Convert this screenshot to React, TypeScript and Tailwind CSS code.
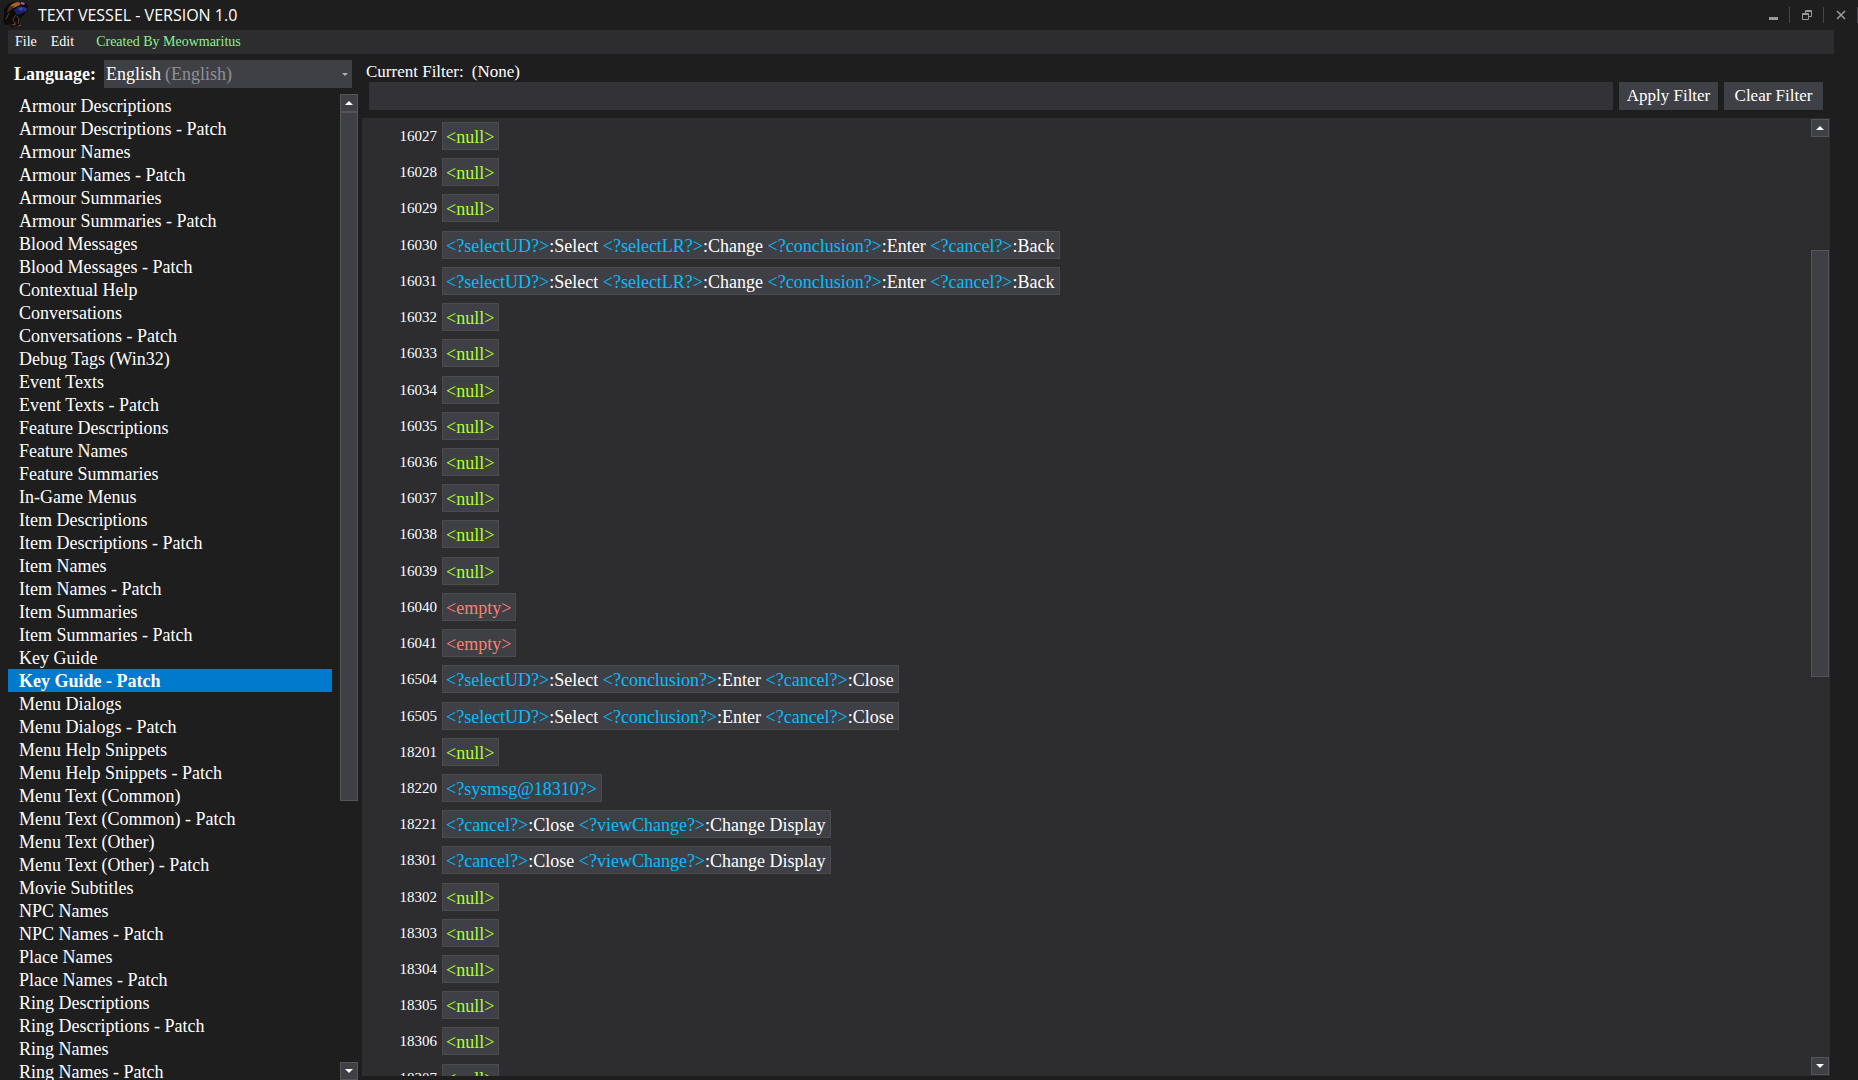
import React, { useState } from 'react';

interface Entry {
  id: number;
  text: string;
}

const categories = [
  'Armour Descriptions',
  'Armour Descriptions - Patch',
  'Armour Names',
  'Armour Names - Patch',
  'Armour Summaries',
  'Armour Summaries - Patch',
  'Blood Messages',
  'Blood Messages - Patch',
  'Contextual Help',
  'Conversations',
  'Conversations - Patch',
  'Debug Tags (Win32)',
  'Event Texts',
  'Event Texts - Patch',
  'Feature Descriptions',
  'Feature Names',
  'Feature Summaries',
  'In-Game Menus',
  'Item Descriptions',
  'Item Descriptions - Patch',
  'Item Names',
  'Item Names - Patch',
  'Item Summaries',
  'Item Summaries - Patch',
  'Key Guide',
  'Key Guide - Patch',
  'Menu Dialogs',
  'Menu Dialogs - Patch',
  'Menu Help Snippets',
  'Menu Help Snippets - Patch',
  'Menu Text (Common)',
  'Menu Text (Common) - Patch',
  'Menu Text (Other)',
  'Menu Text (Other) - Patch',
  'Movie Subtitles',
  'NPC Names',
  'NPC Names - Patch',
  'Place Names',
  'Place Names - Patch',
  'Ring Descriptions',
  'Ring Descriptions - Patch',
  'Ring Names',
  'Ring Names - Patch',
];

const selectText = '<?selectUD?>:Select <?selectLR?>:Change <?conclusion?>:Enter <?cancel?>:Back';
const closeText = '<?selectUD?>:Select <?conclusion?>:Enter <?cancel?>:Close';
const displayText = '<?cancel?>:Close <?viewChange?>:Change Display';

const entries: Entry[] = [
  { id: 16027, text: '<null>' },
  { id: 16028, text: '<null>' },
  { id: 16029, text: '<null>' },
  { id: 16030, text: selectText },
  { id: 16031, text: selectText },
  { id: 16032, text: '<null>' },
  { id: 16033, text: '<null>' },
  { id: 16034, text: '<null>' },
  { id: 16035, text: '<null>' },
  { id: 16036, text: '<null>' },
  { id: 16037, text: '<null>' },
  { id: 16038, text: '<null>' },
  { id: 16039, text: '<null>' },
  { id: 16040, text: '<empty>' },
  { id: 16041, text: '<empty>' },
  { id: 16504, text: closeText },
  { id: 16505, text: closeText },
  { id: 18201, text: '<null>' },
  { id: 18220, text: '<?sysmsg@18310?>' },
  { id: 18221, text: displayText },
  { id: 18301, text: displayText },
  { id: 18302, text: '<null>' },
  { id: 18303, text: '<null>' },
  { id: 18304, text: '<null>' },
  { id: 18305, text: '<null>' },
  { id: 18306, text: '<null>' },
  { id: 18307, text: '<null>' },
];

function tokenColor(token: string) {
  if (token === '<null>') return 'text-[#adff2f]';
  if (token === '<empty>') return 'text-[#fa8072]';
  if (token.startsWith('<?')) return 'text-[#00bfff]';
  return 'text-white';
}

function EntryText({ text }: { text: string }) {
  // keep the tags as separate tokens so they can be coloured
  const tokens = text.split(/(<[^>]*>)/).filter(Boolean);
  return (
    <>
      {tokens.map((token, i) => (
        <span key={i} className={tokenColor(token)}>
          {token}
        </span>
      ))}
    </>
  );
}

function ScrollButton({ direction }: { direction: 'up' | 'down' }) {
  return (
    <button
      aria-label={`Scroll ${direction}`}
      className="flex h-[18px] w-full shrink-0 items-center justify-center border border-[#555558] bg-[#3f3f46]"
    >
      <svg width="8" height="4" viewBox="0 0 8 4" fill="#fff">
        {direction === 'up' ? <path d="M0 4 4 0l4 4z" /> : <path d="M0 0h8L4 4z" />}
      </svg>
    </button>
  );
}

function AppIcon() {
  return (
    <svg width="28" height="28" viewBox="0 0 28 28" fill="none">
      <path d="M2 8 6 3l6-2h10l4 3-1 6-5 6-3 3 1 7-4-2-4 3-2-4-5 1-2-5 1-4z" fill="#0d0b0c" />
      <path d="M8 5c2-2 5-4 9-4l2 2-3 2-5 2-4 2z" fill="#a8602a" />
      <path d="M6 7c2-2 4-2 6-2l-3 4-4 3z" fill="#4a2a1c" />
      <path d="m19 1 4 1-1 2-3-1z" fill="#b45ab8" />
      <path d="m12 9 5-4 6 1 2 2-4 4-6 2z" fill="#1a2260" />
      <path d="m16 8 3-2 3 1-3 3z" fill="#3547b0" />
      <path d="m22 7 3 1-2 3z" fill="#4a3a8c" />
      <path d="m14 14-3 4 2 5m2-8 2 3-1 5M7 12l-3 6" stroke="#5c4230" />
      <path d="m10 24 4-1m2 2 3-1" stroke="#7a5034" />
    </svg>
  );
}

export default function App() {
  const [selected, setSelected] = useState('Key Guide - Patch');
  const [language, setLanguage] = useState('English');
  const [filter, setFilter] = useState('');

  return (
    <div className="flex h-screen flex-col overflow-hidden bg-[#1e1e1e] font-['Liberation_Serif',serif] text-white">
      {/* Title bar */}
      <header className="flex h-[30px] shrink-0 items-center pl-[2px]">
        <AppIcon />
        <h1 className="ml-2 font-['Open_Sans',sans-serif] text-base leading-5">TEXT VESSEL - VERSION 1.0</h1>
        <div className="ml-auto flex items-center text-[#999]">
          <button aria-label="Minimize" className="flex h-4 w-8 items-center justify-center">
            <svg width="10" height="10" viewBox="0 0 10 10" fill="currentColor">
              <path d="M1 7h9v3H1z" />
            </svg>
          </button>
          <button
            aria-label="Restore"
            className="flex h-4 w-[34px] items-center justify-center border-l border-[#46464a]"
          >
            <svg width="10" height="10" viewBox="0 0 10 10" fill="none" stroke="currentColor">
              <path d="M.5 3.5h6v6h-6zM.5 4.5h6M3.5 3V.5h6v6H7M3.5 1.5h6" />
            </svg>
          </button>
          <button
            aria-label="Close"
            className="flex h-4 w-[35px] items-center justify-center border-x border-[#46464a]"
          >
            <svg width="10" height="10" viewBox="0 0 10 10" fill="none" stroke="currentColor" strokeWidth="1.6">
              <path d="m1 1 8 8M9 1 1 9" />
            </svg>
          </button>
        </div>
      </header>

      {/* Menu */}
      <nav className="mr-6 ml-2 flex h-6 shrink-0 items-center bg-[#2d2d30] pl-[7px] text-sm">
        <button>File</button>
        <button className="ml-[14px]">Edit</button>
        <button className="ml-[22px] text-[#90ee90]">Created By Meowmaritus</button>
      </nav>

      <div className="flex min-h-0 flex-1">
        {/* Sidebar */}
        <aside className="flex w-[358px] shrink-0 flex-col pt-[6px] pl-2">
          <div className="flex h-7 shrink-0 items-center pr-[6px] pl-[6px] text-lg">
            <label htmlFor="language" className="w-[90px] font-bold">
              Language:
            </label>
            <div className="flex h-7 flex-1 items-center bg-[#3f3f46] pr-1 pl-[2px]">
              <select
                id="language"
                value={language}
                onChange={(e) => setLanguage(e.target.value)}
                className="appearance-none [field-sizing:content]"
              >
                <option>English</option>
              </select>
              <span className="ml-1 text-[#8f8f94]">(English)</span>
              <svg className="ml-auto" width="6" height="3" viewBox="0 0 6 3" fill="#b0b0b4">
                <path d="M0 0h6L3 3z" />
              </svg>
            </div>
          </div>

          <div className="mt-[6px] flex min-h-0 flex-1">
            <ul className="mr-2 flex-1 overflow-hidden text-lg leading-[25px]">
              {categories.map((name) => (
                <li key={name}>
                  <button
                    onClick={() => setSelected(name)}
                    className={`flex h-[23px] w-full items-start pl-[11px] text-left whitespace-nowrap ${
                      name === selected ? 'bg-[#007acc] font-bold' : ''
                    }`}
                  >
                    {name}
                  </button>
                </li>
              ))}
            </ul>
            <div className="flex w-[18px] flex-col">
              <ScrollButton direction="up" />
              <div className="flex min-h-0 flex-1 flex-col">
                <div className="h-[72.5%] border border-[#555558] bg-[#3f3f46]" />
              </div>
              <ScrollButton direction="down" />
            </div>
          </div>
        </aside>

        {/* Main */}
        <main className="mr-7 ml-1 flex min-w-0 flex-1 flex-col pb-1">
          <div className="mt-2 ml-1 h-5 text-[17px] leading-5">
            <label htmlFor="filter">Current Filter:</label>
            <span className="ml-2">(None)</span>
          </div>
          <form
            onSubmit={(e) => e.preventDefault()}
            className="mr-[7px] ml-[7px] flex h-7 shrink-0 gap-[6px] text-[17px]"
          >
            <input
              id="filter"
              type="text"
              value={filter}
              onChange={(e) => setFilter(e.target.value)}
              className="min-w-0 flex-1 bg-[#333337] px-1 outline-none"
            />
            <button type="submit" className="w-[99px] bg-[#3f3f46]">
              Apply Filter
            </button>
            <button type="button" onClick={() => setFilter('')} className="w-[99px] bg-[#3f3f46]">
              Clear Filter
            </button>
          </form>

          <section className="mt-2 flex min-h-0 flex-1 overflow-hidden bg-[#2d2d30] p-px">
            <ul className="mt-[3px] flex h-[calc(100%+14px)] flex-1 flex-col justify-between">
              {entries.map((entry) => (
                <li key={entry.id} className="flex h-7 shrink-0 items-center">
                  <span className="w-[74px] text-right text-[15px] leading-7">{entry.id}</span>
                  <span className="ml-[5px] h-7 border border-[#4a4a4f] bg-[#3f3f46] px-1 pl-[3px] text-lg leading-7 whitespace-nowrap">
                    <EntryText text={entry.text} />
                  </span>
                </li>
              ))}
            </ul>
            <div className="flex w-[18px] flex-col">
              <ScrollButton direction="up" />
              <div className="flex min-h-0 flex-1 flex-col">
                <div className="h-[12.3%]" />
                <div className="h-[46.4%] border border-[#555558] bg-[#3f3f46]" />
              </div>
              <ScrollButton direction="down" />
            </div>
          </section>
        </main>
      </div>
    </div>
  );
}
